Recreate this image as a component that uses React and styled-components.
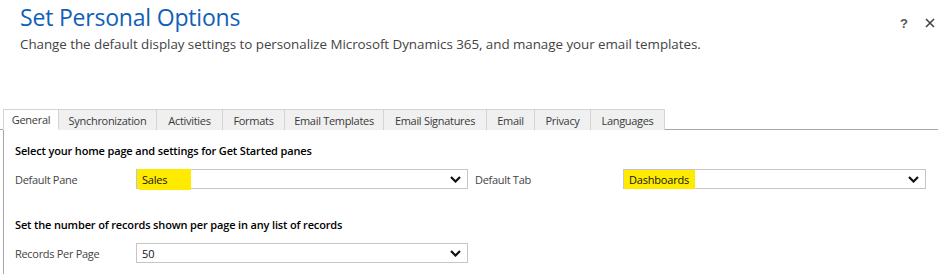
import React from "react";
import styled, { createGlobalStyle } from "styled-components";

const Global = createGlobalStyle`
  html, body { margin: 0; padding: 0; background: #fff; }
  body { font-family: "Segoe UI", "Open Sans", "Noto Sans", sans-serif; color: #000; }
  * { box-sizing: border-box; }
`;

const Page = styled.div`
  width: 938px;
  height: 274px;
  overflow: hidden;
  display: flex;
  flex-direction: column;
`;

const Header = styled.header`
  display: flex;
  justify-content: space-between;
  align-items: flex-start;
  padding: 2px 2px 0 20px;
  height: 109px;
`;

const TitleBlock = styled.div`
  display: flex;
  flex-direction: column;
`;

const Title = styled.h1`
  margin: 0;
  font-size: 23px;
  font-weight: 400;
  line-height: 31px;
  color: #1160b7;
  letter-spacing: -0.2px;
`;

const Subtitle = styled.p`
  margin: 2px 0 0;
  font-size: 13.4px;
  line-height: 18px;
  color: #444;
  letter-spacing: -0.05px;
`;

const HeaderActions = styled.div`
  display: flex;
  gap: 14px;
  align-items: center;
  margin-top: 14px;
`;

const IconBtn = styled.span`
  display: inline-flex;
  width: 12px;
  height: 14px;
  align-items: center;
  justify-content: center;
  font-size: 13px;
  font-weight: 700;
  color: #555;
  font-family: "Liberation Sans", Arial, sans-serif;
`;

const TabBar = styled.div`
  display: flex;
  padding-left: 3px;
  height: 21px;
  border-bottom: 1px solid #a6a6a6;
`;

const Tab = styled.div`
  height: 21px;
  display: flex;
  align-items: center;
  justify-content: center;
  font-size: 11px;
  letter-spacing: -0.3px;
  color: #3a3a3a;
  background: ${(p) => (p.$active ? "#fff" : "#f0f0f0")};
  border: 1px solid #d4d4d4;
  border-left: ${(p) => (p.$first ? "1px solid #d4d4d4" : "none")};
  border-bottom: ${(p) => (p.$active ? "1px solid #fff" : "none")};
  margin-bottom: ${(p) => (p.$active ? "-1px" : "0")};
  width: ${(p) => p.$w}px;
`;

const Panel = styled.div`
  flex: 1;
  margin-left: 3px;
  border-left: 1px solid #a6a6a6;
  padding: 13px 12px 0 11px;
  display: flex;
  flex-direction: column;
`;

const SectionTitle = styled.div`
  font-size: 11px;
  letter-spacing: -0.15px;
  font-weight: 600;
  color: #000;
  line-height: 16px;
  margin-top: ${(p) => p.$mt || 0}px;
`;

const FieldRow = styled.div`
  display: flex;
  align-items: center;
  margin-top: ${(p) => p.$mt}px;
  height: 20px;
`;

const Label = styled.div`
  width: ${(p) => p.$w}px;
  margin-left: ${(p) => p.$ml || 0}px;
  font-size: 11px;
  letter-spacing: -0.3px;
  color: #444;
  flex-shrink: 0;
`;

const SelectBox = styled.div`
  position: relative;
  width: ${(p) => p.$w}px;
  height: 20px;
  border: 1px solid #c6c6c6;
  display: flex;
  align-items: center;
  flex-shrink: 0;
`;

const Highlight = styled.span`
  display: inline-flex;
  align-items: center;
  height: ${(p) => p.$h || 19}px;
  padding: 0 ${(p) => p.$pr}px 0 5px;
  background: #ffeb00;
  font-size: 11px;
  letter-spacing: -0.2px;
  color: #111;
  border-radius: ${(p) => p.$r || "0"};
`;

const Value = styled.span`
  padding-left: 5px;
  font-size: 11px;
  color: #111;
`;

const Chevron = styled.svg`
  position: absolute;
  right: 6px;
  top: 6px;
`;

function Caret() {
  return (
    <Chevron width="11" height="7" viewBox="0 0 11 7">
      <path d="M1 1 L5.5 5.5 L10 1" fill="none" stroke="#111" strokeWidth="2.2" />
    </Chevron>
  );
}

const tabs = [
  ["General", 56],
  ["Synchronization", 98],
  ["Activities", 66],
  ["Formats", 62],
  ["Email Templates", 99],
  ["Email Signatures", 103],
  ["Email", 48],
  ["Privacy", 56],
  ["Languages", 74],
];

export default function App() {
  return (
    <Page>
      <Global />
      <Header>
        <TitleBlock>
          <Title>Set Personal Options</Title>
          <Subtitle>
            Change the default display settings to personalize Microsoft Dynamics 365, and manage your email templates.
          </Subtitle>
        </TitleBlock>
        <HeaderActions>
          <IconBtn>?</IconBtn>
          <IconBtn>
            <svg width="10" height="10" viewBox="0 0 10 10">
              <path d="M1 1 L9 9 M9 1 L1 9" stroke="#444" strokeWidth="1.6" />
            </svg>
          </IconBtn>
        </HeaderActions>
      </Header>
      <TabBar>
        {tabs.map(([t, w], i) => (
          <Tab key={t} $w={w} $active={i === 0} $first={i === 0}>
            {t}
          </Tab>
        ))}
      </TabBar>
      <Panel>
        <SectionTitle>Select your home page and settings for Get Started panes</SectionTitle>
        <FieldRow $mt={10}>
          <Label $w={121}>Default Pane</Label>
          <SelectBox $w={332}>
            <Highlight $pr={24} $h={21} $r="2px 0 0 4px">Sales</Highlight>
            <Caret />
          </SelectBox>
          <Label $w={148} $ml={7}>Default Tab</Label>
          <SelectBox $w={303}>
            <Highlight $pr={6}>Dashboards</Highlight>
            <Caret />
          </SelectBox>
        </FieldRow>
        <SectionTitle $mt={28}>Set the number of records shown per page in any list of records</SectionTitle>
        <FieldRow $mt={10}>
          <Label $w={121}>Records Per Page</Label>
          <SelectBox $w={332}>
            <Value>50</Value>
            <Caret />
          </SelectBox>
        </FieldRow>
      </Panel>
    </Page>
  );
}
